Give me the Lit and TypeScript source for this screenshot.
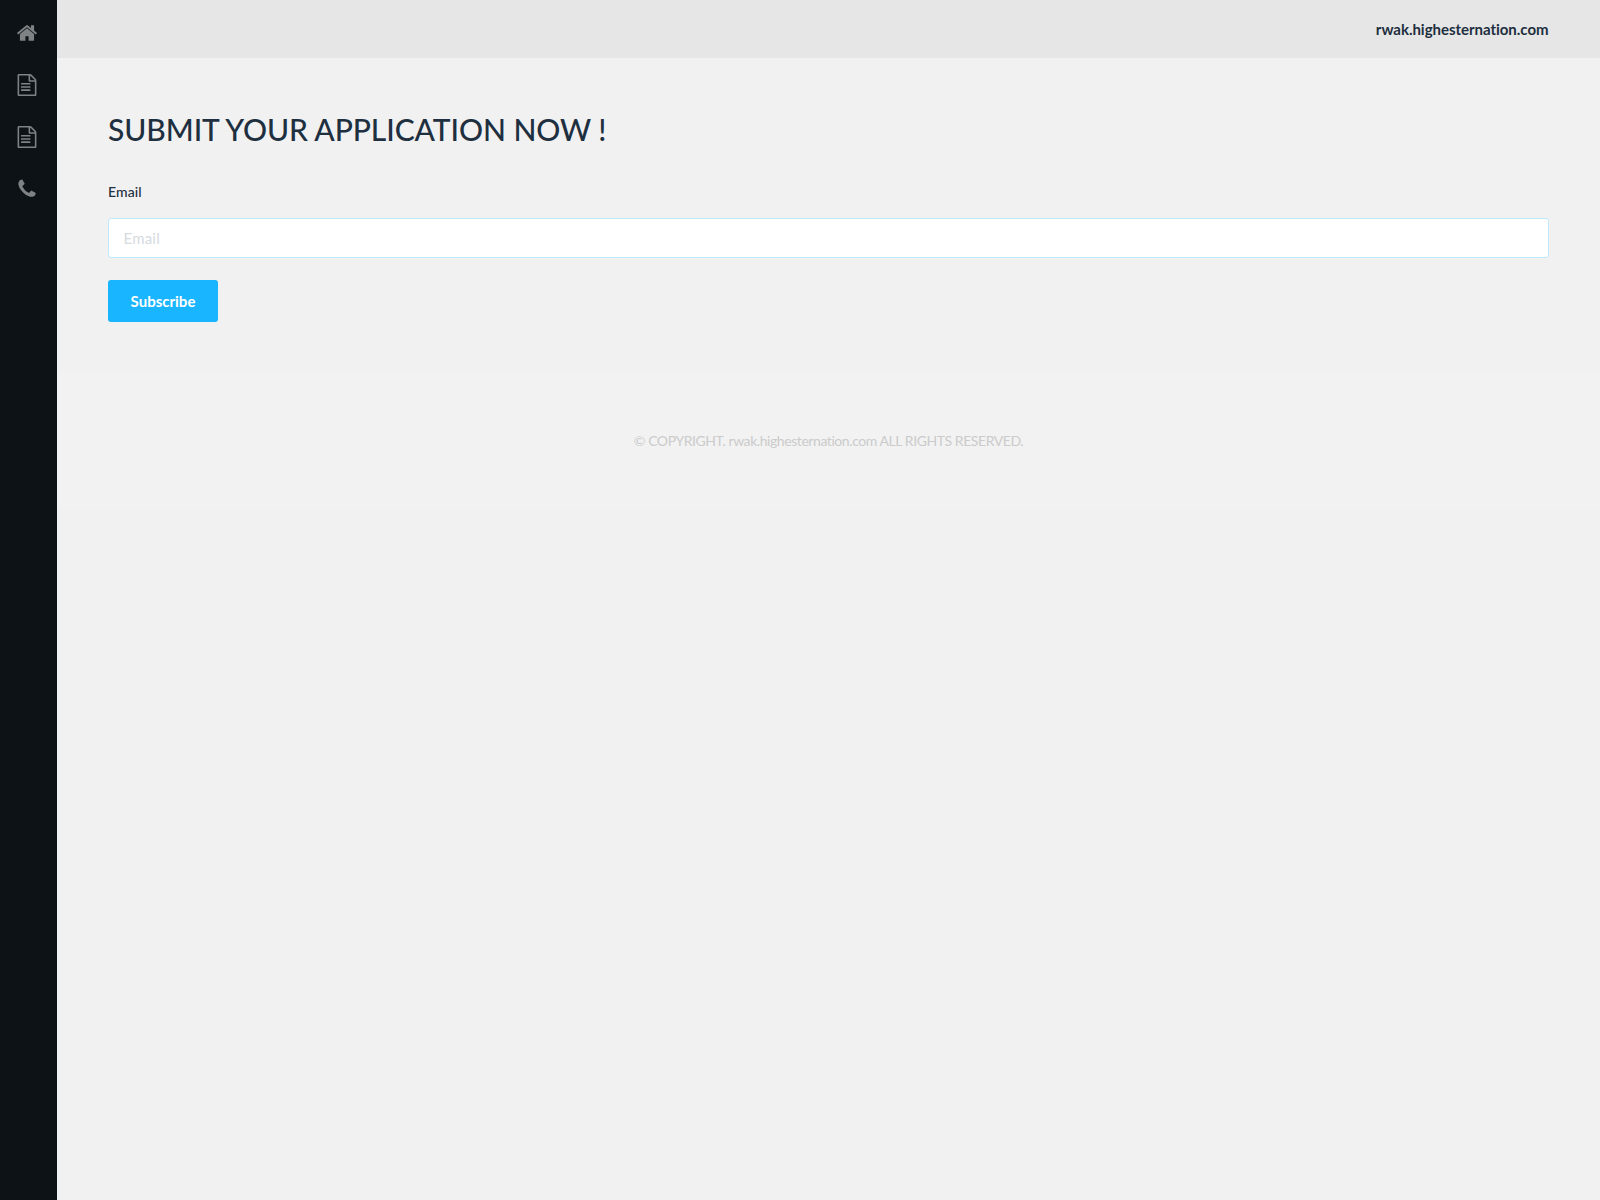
import { LitElement, html, css, svg } from "lit";
import { customElement } from "lit/decorators.js";

const HOME = "M1472 992v480q0 26-19 45t-45 19h-384v-384h-256v384h-384q-26 0-45-19t-19-45v-480q0-1 .5-3t.5-3l575-474 575 474q1 2 1 6zm223-69l-62 74q-8 9-21 11h-3q-13 0-21-7l-692-577-692 577q-12 8-24 7-13-2-21-11l-62-74q-8-10-7-23.500t11-21.500l719-599q32-26 76-26t76 26l244 204v-195q0-14 9-23t23-9h192q14 0 23 9t9 23v408l219 182q10 8 11 21.500t-7 23.500z";
const FILE = "M1596 380q28 28 48 76t20 88v1152q0 40-28 68t-68 28h-1344q-40 0-68-28t-28-68v-1600q0-40 28-68t68-28h896q40 0 88 20t76 48zm-444-244v376h376q-10-29-22-41l-313-313q-12-12-41-22zm384 1528v-1024h-416q-40 0-68-28t-28-68v-416h-768v1536h1280zm-1128-896q0-14 9-23t23-9h704q14 0 23 9t9 23v64q0 14-9 23t-23 9h-704q-14 0-23-9t-9-23v-64zm736 224q14 0 23 9t9 23v64q0 14-9 23t-23 9h-704q-14 0-23-9t-9-23v-64q0-14 9-23t23-9h704zm0 256q14 0 23 9t9 23v64q0 14-9 23t-23 9h-704q-14 0-23-9t-9-23v-64q0-14 9-23t23-9h704z";
const PHONE = "M1600 1240q0 27-10 70.500t-21 68.500q-21 50-122 106-94 51-186 51-27 0-53-3.500t-57.500-12.500-47-14.500-55.500-20.500-49-18q-98-35-175-83-127-79-264-216t-216-264q-48-77-83-175-3-9-18-49t-20.500-55.500-14.500-47-12.500-57.500-3.500-53q0-92 51-186 56-101 106-122 25-11 68.500-21t70.500-10q14 0 21 3 18 6 53 76 11 19 30 54t35 63.500 31 53.500q3 4 17.500 25t21.500 35.500 7 28.500q0 20-28.500 50t-62 55-62 53-28.500 46q0 9 5 22.500t8.500 20.500 14 24 11.500 19q76 137 174 235t235 174q2 1 19 11.500t24 14 20.500 8.500 22.500 5q18 0 46-28.500t53-62 55-62 50-28.500q14 0 28.500 7t35.500 21.500 25 17.500q25 15 53.500 31t63.500 35 54 30q70 35 76 53 3 7 3 21z";

const icon = (d: string) => html`<a class="nav-item" href="#"><svg class="icon" viewBox="0 0 1792 1792">${svg`<path d=${d}></path>`}</svg></a>`;

@customElement("app-root")
export class AppRoot extends LitElement {
  static styles = css`
    :host { display: flex; min-height: 1200px; background: #f1f1f1; color: #1e2f40; font-family: "Lato", "Noto Sans", sans-serif; }
    * { box-sizing: border-box; }
    .sidebar { width: 57px; flex: none; background: #0c1216; padding-top: 7px; display: flex; flex-direction: column; }
    .nav-item { height: 52px; display: flex; align-items: center; justify-content: center; padding-right: 3px; }
    .icon { width: 22px; height: 22px; fill: #7e8285; display: block; }
    .main { flex: 1; min-width: 0; display: flex; flex-direction: column; }
    .topbar { height: 58px; background: #e6e6e6; display: flex; align-items: center; justify-content: flex-end; padding: 0 51.5px 0 0; font-size: 15px; font-weight: 700; letter-spacing: -0.03px; }
    .content { padding: 51px 51.5px 0 51px; height: 316px; }
    h1 { margin: 0; font-size: 30px; line-height: 40px; font-weight: 500; letter-spacing: -0.07px; }
    label { display: block; margin-top: 33px; font-size: 14px; line-height: 20px; font-weight: 500; letter-spacing: 0.1px; }
    input { display: block; width: 100%; height: 40px; margin-top: 16px; padding: 0 14.5px; background: #fff; border: 1px solid #bfe9ff; border-radius: 3px; font: inherit; font-size: 15px; letter-spacing: 0.2px; outline: none; }
    input::placeholder { color: #d6dbe0; }
    button { display: block; width: 110px; height: 42px; margin-top: 22px; padding: 0; background: #19b5fe; border: none; border-radius: 3px; color: #fff; font: inherit; font-size: 15px; font-weight: 700; }
    footer { height: 136px; padding-bottom: 3px; background: #f2f2f2; display: flex; align-items: center; justify-content: center; font-size: 14px; font-weight: 400; letter-spacing: -0.43px; color: #cbcbcb; }
  `;
  render() {
    return html`
      <nav class="sidebar">${icon(HOME)}${icon(FILE)}${icon(FILE)}${icon(PHONE)}</nav>
      <div class="main">
        <header class="topbar">rwak.highesternation.com</header>
        <section class="content">
          <h1>SUBMIT YOUR APPLICATION NOW !</h1>
          <label for="email">Email</label>
          <input id="email" type="email" placeholder="Email" />
          <button>Subscribe</button>
        </section>
        <footer>© COPYRIGHT. rwak.highesternation.com ALL RIGHTS RESERVED.</footer>
      </div>
    `;
  }
}
